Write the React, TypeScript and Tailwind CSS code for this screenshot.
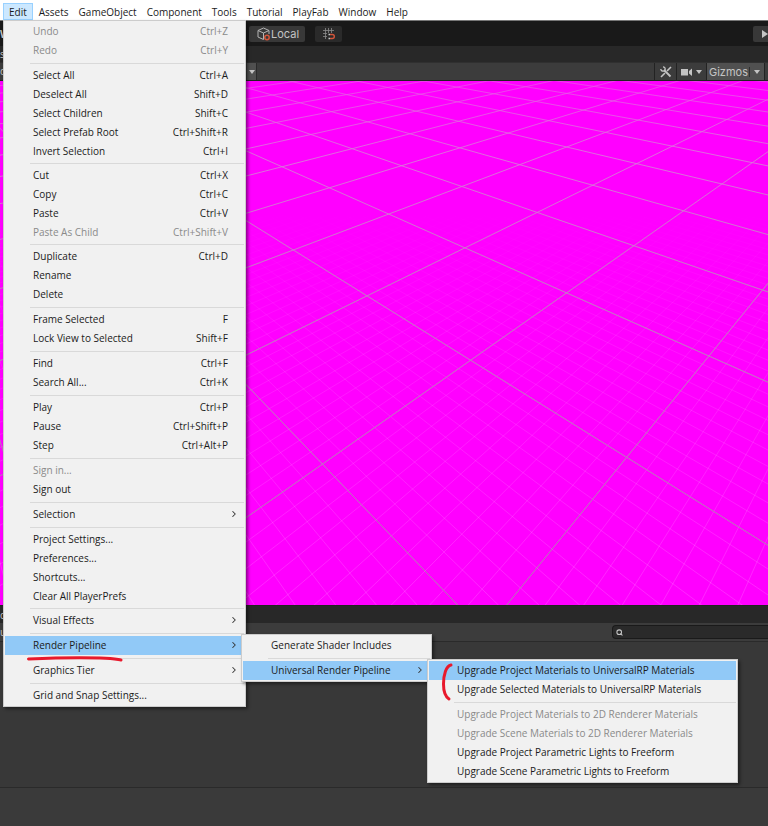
import React from 'react';
import { ChevronRight, Search } from 'lucide-react';

type Item = {
  label: string;
  keys?: string;
  disabled?: boolean;
  children?: Item[][];
  open?: boolean;
  active?: boolean;
  mark?: 'underline' | 'bracket';
};

const menuTitles = ['Assets', 'GameObject', 'Component', 'Tools', 'Tutorial', 'PlayFab', 'Window', 'Help'];

const urpMenu: Item[][] = [
  [
    { label: 'Upgrade Project Materials to UniversalRP Materials', active: true, mark: 'bracket' },
    { label: 'Upgrade Selected Materials to UniversalRP Materials' },
  ],
  [
    { label: 'Upgrade Project Materials to 2D Renderer Materials', disabled: true },
    { label: 'Upgrade Scene Materials to 2D Renderer Materials', disabled: true },
    { label: 'Upgrade Project Parametric Lights to Freeform' },
    { label: 'Upgrade Scene Parametric Lights to Freeform' },
  ],
];

const pipelineMenu: Item[][] = [
  [{ label: 'Generate Shader Includes' }],
  [{ label: 'Universal Render Pipeline', children: urpMenu, open: true }],
];

const editMenu: Item[][] = [
  [
    { label: 'Undo', keys: 'Ctrl+Z', disabled: true },
    { label: 'Redo', keys: 'Ctrl+Y', disabled: true },
  ],
  [
    { label: 'Select All', keys: 'Ctrl+A' },
    { label: 'Deselect All', keys: 'Shift+D' },
    { label: 'Select Children', keys: 'Shift+C' },
    { label: 'Select Prefab Root', keys: 'Ctrl+Shift+R' },
    { label: 'Invert Selection', keys: 'Ctrl+I' },
  ],
  [
    { label: 'Cut', keys: 'Ctrl+X' },
    { label: 'Copy', keys: 'Ctrl+C' },
    { label: 'Paste', keys: 'Ctrl+V' },
    { label: 'Paste As Child', keys: 'Ctrl+Shift+V', disabled: true },
  ],
  [{ label: 'Duplicate', keys: 'Ctrl+D' }, { label: 'Rename' }, { label: 'Delete' }],
  [
    { label: 'Frame Selected', keys: 'F' },
    { label: 'Lock View to Selected', keys: 'Shift+F' },
  ],
  [
    { label: 'Find', keys: 'Ctrl+F' },
    { label: 'Search All...', keys: 'Ctrl+K' },
  ],
  [
    { label: 'Play', keys: 'Ctrl+P' },
    { label: 'Pause', keys: 'Ctrl+Shift+P' },
    { label: 'Step', keys: 'Ctrl+Alt+P' },
  ],
  [{ label: 'Sign in...', disabled: true }, { label: 'Sign out' }],
  [{ label: 'Selection', children: [] }],
  [
    { label: 'Project Settings...' },
    { label: 'Preferences...' },
    { label: 'Shortcuts...' },
    { label: 'Clear All PlayerPrefs' },
  ],
  [{ label: 'Visual Effects', children: [] }],
  [{ label: 'Render Pipeline', children: pipelineMenu, open: true, mark: 'underline' }],
  [{ label: 'Graphics Tier', children: [] }],
  [{ label: 'Grid and Snap Settings...' }],
];

const Mark = ({ kind }: { kind: 'underline' | 'bracket' }) =>
  kind === 'underline' ? (
    <svg className="pointer-events-none absolute left-5 top-5 h-2 w-[100px]" viewBox="0 0 100 8" fill="none" stroke="#e8192c" strokeWidth="3" strokeLinecap="round">
      <path d="M3.500 3 C25 2 60 1.500 75 2 S92 3.500 96 4" />
    </svg>
  ) : (
    <svg className="pointer-events-none absolute left-2.5 top-0.5 h-[42px] w-4" viewBox="0 0 16 42" fill="none" stroke="#e8192c" strokeWidth="3" strokeLinecap="round">
      <path d="M12 2 C7 3 4.500 12 4.500 21 C4.500 30 7 34 10 36" />
    </svg>
  );

const Menu = ({ groups, className }: { groups: Item[][]; className: string }) => (
  <ul role="menu" className={`absolute border border-[#cccccc] bg-[#f1f1f1] p-px text-[#1b1b1b] shadow-[2px_2px_3px_rgba(0,0,0,0.45)] ${className}`}>
    {groups.map((group, g) => (
      <React.Fragment key={g}>
        {g > 0 && (
          <li role="separator" className={`flex items-center pl-[25px] ${groups[g - 1].length > 3 ? 'h-[5px]' : 'h-[6px]'}`}>
            <span className="h-px flex-1 bg-[#d9d9d9]" />
          </li>
        )}
        {group.map((item) => (
          <li key={item.label} role="none" className="relative">
            <button
              role="menuitem"
              disabled={item.disabled}
              className={`flex h-[19px] w-full items-center pb-0.5 pl-7 text-left whitespace-nowrap ${item.open || item.active ? 'bg-[#91c9f7]' : ''} ${item.disabled ? 'text-[#8a8a8a]' : ''}`}
            >
              <span className="flex-1">{item.label}</span>
              {item.keys && <span className="pr-4">{item.keys}</span>}
              {item.children && <ChevronRight className="mr-[5px] h-2.5 w-2.5 text-[#333333]" strokeWidth={2.5} />}
            </button>
            {item.children && item.open && (
              <Menu
                groups={item.children}
                className={item.children === urpMenu ? '-top-0.5 left-[184px] z-20 w-[311px]' : '-top-0.5 left-[236px] z-10 w-[191px]'}
              />
            )}
            {item.mark && <Mark kind={item.mark} />}
          </li>
        ))}
      </React.Fragment>
    ))}
  </ul>
);

// Ground plane to view projection, i and j count the major grid cells
const project = (i: number, j: number) => {
  const w = 1 - 0.14406 * i + 0.152 * j;
  const x = (160 + 166.22 * i + 353.96 * j) / w;
  const y = (510 + 44.25 * i - 46.7 * j) / w;
  return `${(240 + x / 3).toFixed(2)} ${(y / 3 - 1).toFixed(2)}`;
};

const gridPath = (from: number, to: number, step: number) => {
  let d = '';
  for (let n = from; n <= to; n++) {
    const k = n * step;
    d += `M${project(k, (0.14406 * k - 0.85) / 0.152)}L${project(k, 150)}`;
    d += `M${project((0.85 + 0.152 * k) / 0.14406, k)}L${project(-150, k)}`;
  }
  return d;
};

const SceneGrid = () => (
  <svg className="h-full w-full" viewBox="0 0 768 524" preserveAspectRatio="xMidYMid slice" fill="none">
    <defs>
      <linearGradient id="majorFade" gradientUnits="userSpaceOnUse" x1="0" y1="0" x2="0" y2="524">
        <stop offset="0" stopColor="#e65ae6" stopOpacity="0.7" />
        <stop offset="0.15" stopColor="#d878d8" stopOpacity="0.9" />
        <stop offset="0.4" stopColor="#c07cc0" />
        <stop offset="1" stopColor="#b070b0" />
      </linearGradient>
      <linearGradient id="minorFade" gradientUnits="userSpaceOnUse" x1="0" y1="0" x2="0" y2="524">
        <stop offset="0.25" stopColor="#ffffff" stopOpacity="0" />
        <stop offset="0.5" stopColor="#ffffff" stopOpacity="0.08" />
        <stop offset="1" stopColor="#ffffff" stopOpacity="0.15" />
      </linearGradient>
    </defs>
    <path d={gridPath(-50, 80, 0.1)} stroke="url(#minorFade)" />
    <path d={gridPath(-16, 16, 1)} stroke="url(#majorFade)" />
  </svg>
);

const Caret = () => <span className="h-0 w-0 border-x-[3px] border-t-4 border-x-transparent border-t-[#c4c4c4]" />;

const App = () => (
  <div className="flex h-screen flex-col overflow-hidden bg-[#383838] font-['Open_Sans','Noto_Sans',sans-serif] text-[10px] leading-4 text-[#c4c4c4]">
    <nav className="relative z-10 flex h-5 items-end bg-white pl-[3px] text-[#1b1b1b]">
      <div className="relative mr-px">
        <button className="block h-[17px] border border-[#99d1ff] bg-[#cce8ff] px-[5px] leading-4">Edit</button>
        <Menu groups={editMenu} className="left-0 top-full w-[243px]" />
      </div>
      {menuTitles.map((title) => (
        <button key={title} className="h-[17px] px-[5px] leading-4">{title}</button>
      ))}
    </nav>

    <div className="flex h-[26px] items-center border-t border-[#777777] bg-[#191919]">
      <span className="w-[249px] font-bold">W</span>
      <button className="flex h-4 w-14 items-center rounded-xs bg-[#383838] pl-2 font-['Inter',sans-serif] text-[11px]">
        <svg className="h-[14px] w-[14px] shrink-0" viewBox="0 0 14 14" fill="none" stroke="#b4b4b4">
          <path d="M6.500 1 L12 3.500 V7 M6.500 1 L1 3.500 V10 L6.500 12.500 V6 L1 3.500 M6.500 6 L12 3.500" />
          <circle cx="10" cy="10.500" r="2.200" stroke="#d4553a" strokeWidth="1.500" />
        </svg>
        Local
      </button>
      <button aria-label="Grid snapping" className="ml-2.5 flex h-4 w-[27px] items-center justify-center rounded-xs bg-[#2a2a2a]">
        <svg className="h-3 w-3" viewBox="0 0 12 12" fill="none">
          <path d="M2.500 0 V11 M5.500 0 V5 M8.500 0 V5 M0 2.500 H11 M0 5.500 H4 M0 8.500 H4" stroke="#8c8c8c" strokeWidth="0.800" />
          <path d="M7 6.500 H9.300 A2 2 0 0 1 9.300 10.500 H7" stroke="#d4553a" strokeWidth="1.400" />
          <path d="M5.500 6.500 H7 M5.500 10.500 H7" stroke="#c4c4c4" strokeWidth="1.400" />
        </svg>
      </button>
      <button aria-label="Play" className="ml-auto flex h-4 w-[15px] items-center justify-end rounded-l-xs bg-[#383838]">
        <span className="h-0 w-0 border-y-4 border-l-[6px] border-y-transparent border-l-[#c4c4c4]" />
      </button>
    </div>

    <div className="flex h-4 items-center bg-[#282828]">
      <span>s</span>
    </div>

    <div className="flex h-[19px] items-stretch border-y border-t-[#303030] border-b-[#232323] bg-[#3c3c3c]">
      <span className="w-[247px]">d</span>
      <button aria-label="Draw mode" className="flex w-[10px] items-center justify-center border-r border-[#2a2a2a] bg-[#505050]"><Caret /></button>
      <button aria-label="Scene tools" className="ml-auto flex w-[22px] items-center justify-center border-l border-[#232323]">
        <svg className="h-3 w-3" viewBox="0 0 12 12" fill="none" stroke="#c4c4c4">
          <path d="M1 11 L5 7 M7 5 L11 1" strokeWidth="1.600" />
          <path d="M4 4 L10.500 10.500" strokeWidth="1.800" />
          <path d="M3 0.800 A2.200 2.200 0 1 1 0.800 3" strokeWidth="1.300" />
        </svg>
      </button>
      <button aria-label="Scene camera" className="flex w-[30px] items-center justify-center gap-1 border-l border-[#232323]">
        <svg className="h-2 w-[11px]" viewBox="0 0 11 8" fill="#c4c4c4">
          <path d="M0 1 H7 V7.500 H0 Z M8 3 L11 0.500 V8 L8 5.500 Z" />
        </svg>
        <Caret />
      </button>
      <button className="flex w-[59px] items-center justify-between border-x border-[#232323] bg-[#505050] pl-0.5 pr-1 font-['Inter',sans-serif] text-[11px]">
        Gizmos
        <span className="ml-auto mr-1 h-2.5 w-px bg-[#303030]" />
        <Caret />
      </button>
      <span className="w-[3px]" />
    </div>

    <main className="min-h-0 flex-1 bg-[#ff00ff]">
      <SceneGrid />
    </main>

    <section className="border-t border-[#232323]">
      <div className="flex h-[17px] items-center bg-[#282828]">
        <span>c</span>
      </div>
      <div className="flex h-[19px] items-center border-b border-[#2a2a2a] bg-[#3c3c3c]">
        <span>u</span>
        <label className="ml-auto flex h-[14px] w-[156px] items-center rounded-l border border-r-0 border-[#1a1a1a] bg-[#2a2a2a] pl-[3px]">
          <Search className="h-[7px] w-[7px] shrink-0" strokeWidth={3.5} />
          <input type="text" aria-label="Search" className="h-3 w-full bg-transparent px-1 outline-none" />
        </label>
      </div>
      <div className="h-[145px]" />
      <div className="h-[39px] border-t border-[#2a2a2a] bg-[#3a3a3a]" />
    </section>
  </div>
);

export default App;
